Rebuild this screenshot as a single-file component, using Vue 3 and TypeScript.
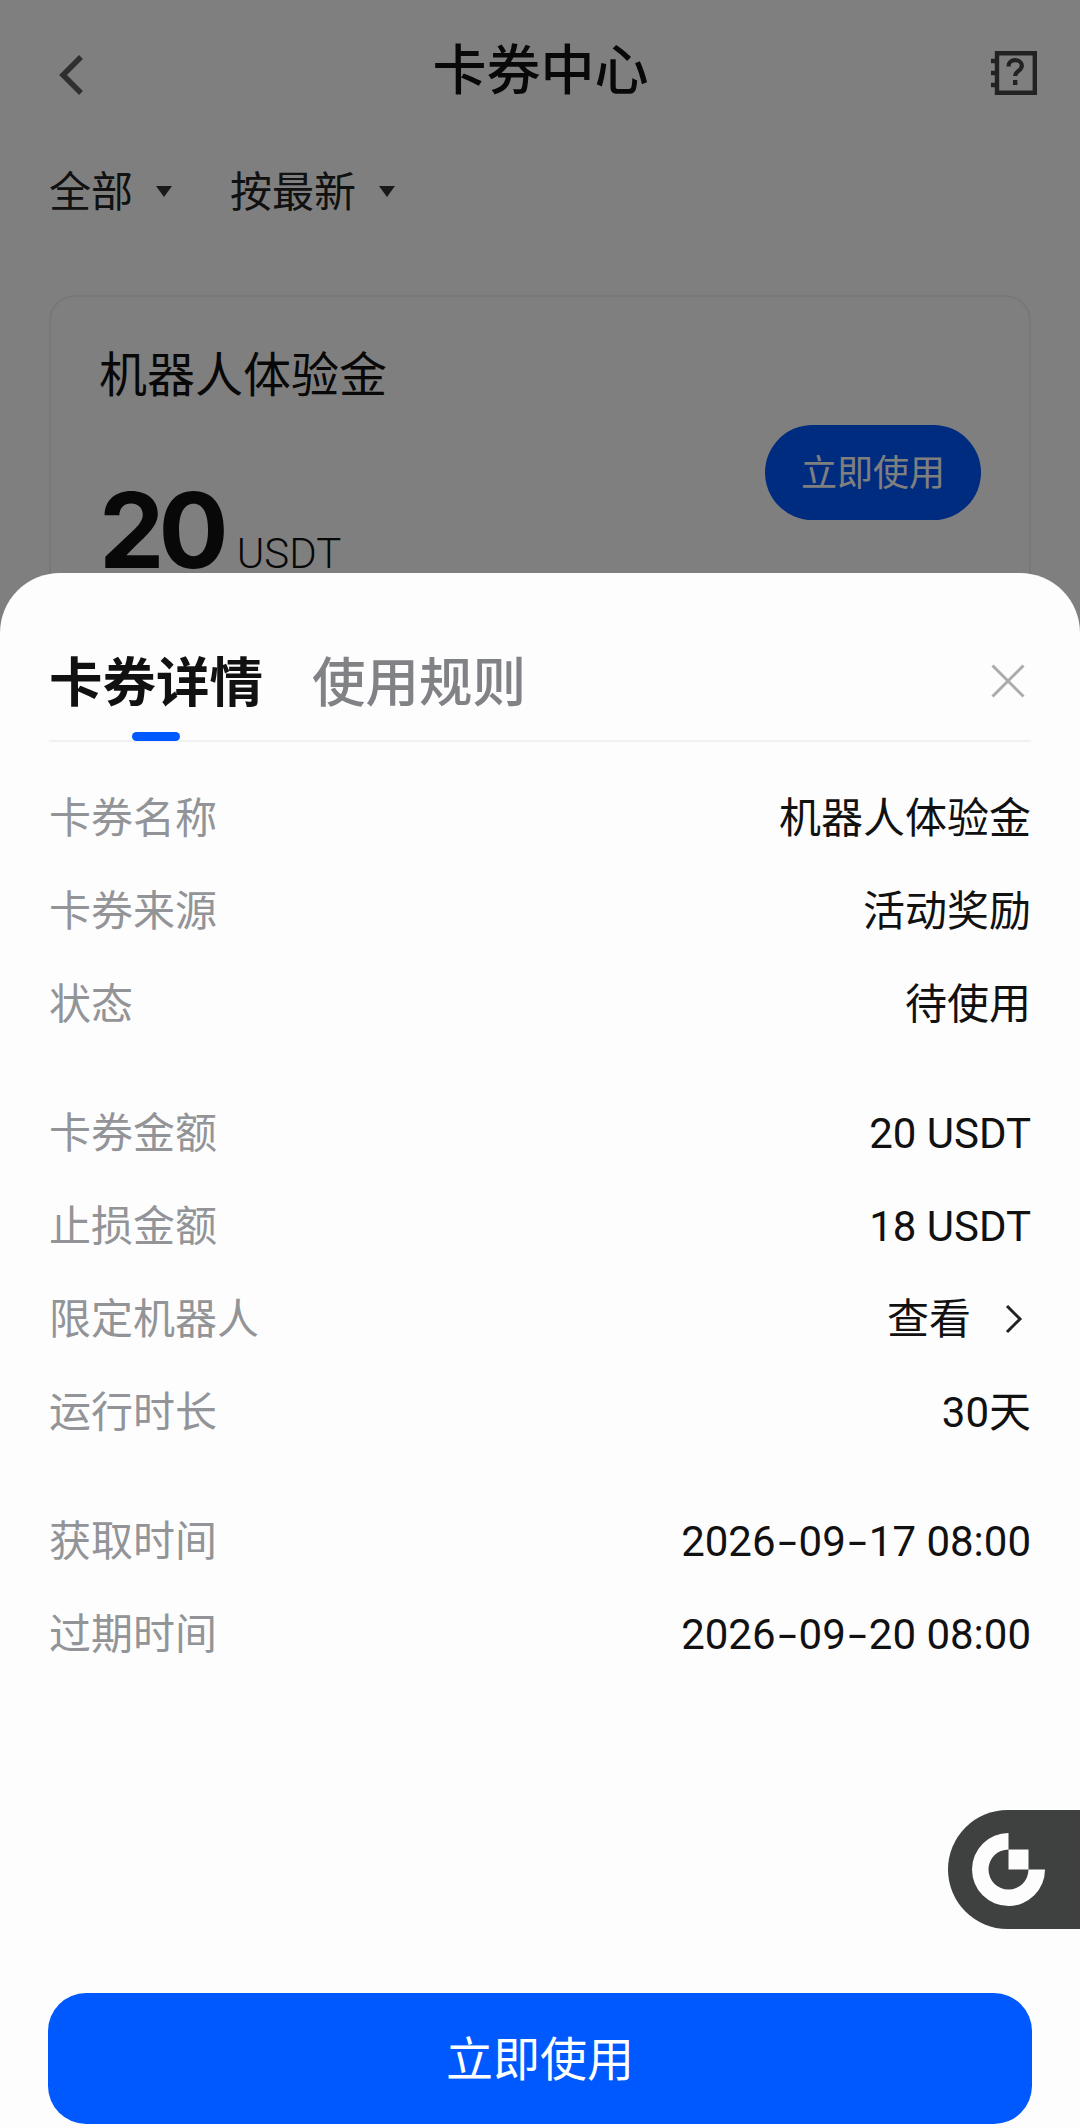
<script setup lang="ts">
interface Row { label: string; value: string; link?: boolean; num?: boolean }
const groups: Row[][] = [
  [
    { label: '卡券名称', value: '机器人体验金' },
    { label: '卡券来源', value: '活动奖励' },
    { label: '状态', value: '待使用' },
  ],
  [
    { label: '卡券金额', value: '20 USDT', num: true },
    { label: '止损金额', value: '18 USDT', num: true },
    { label: '限定机器人', value: '查看', link: true },
    { label: '运行时长', value: '30天' },
  ],
  [
    { label: '获取时间', value: '2026-09-17 08:00', num: true },
    { label: '过期时间', value: '2026-09-20 08:00', num: true },
  ],
]
</script>

<template>
  <div class="page">
    <header class="nav">
      <svg class="back" width="26" height="42" viewBox="0 0 26 42" fill="none">
        <path d="M23 3 5 21l18 18" stroke="#5c5e61" stroke-width="5.500" />
      </svg>
      <h1 class="title">卡券中心</h1>
      <svg class="help" width="46" height="44" viewBox="0 0 46 44" fill="none">
        <path d="M6 2.200h37.800v39.600H6z" stroke="#444" stroke-width="4.400" />
        <path d="M0 10h6M0 22h6M0 34h6" stroke="#444" stroke-width="4.400" />
        <path d="M17.500 15.500c0-4 2.800-6.300 6.700-6.300s6.600 2.300 6.600 5.600c0 5-6.600 5.300-6.600 10.200" stroke="#444" stroke-width="4.200" />
        <path d="M24.200 29v5" stroke="#444" stroke-width="4.400" />
      </svg>
    </header>

    <div class="filters">
      <div class="filter"><span>全部</span><i class="caret"></i></div>
      <div class="filter"><span>按最新</span><i class="caret"></i></div>
    </div>

    <section class="card">
      <div class="card-name">机器人体验金</div>
      <div class="card-foot">
        <div class="amount"><b>20</b><span>USDT</span></div>
        <button class="use-small">立即使用</button>
      </div>
    </section>

    <div class="mask"></div>

    <section class="sheet">
      <div class="tabs">
        <div class="tab active">卡券详情<i class="ink"></i></div>
        <div class="tab">使用规则</div>
        <svg class="close" width="34" height="34" viewBox="0 0 34 34" fill="none">
          <path d="M1.500 1.500l31 31M32.500 1.500l-31 31" stroke="#a9abad" stroke-width="3" />
        </svg>
      </div>

      <div class="groups">
        <div v-for="(group, g) in groups" :key="g" class="group">
          <div v-for="row in group" :key="row.label" class="row">
            <span class="label">{{ row.label }}</span>
            <span class="value" :class="{ num: row.num }">
              <template v-for="(part, p) in row.value.split('-')" :key="p">
                <span v-if="p > 0" class="dash">-</span>{{ part }}
              </template>
              <svg v-if="row.link" class="chev" width="18" height="30" viewBox="0 0 18 30" fill="none">
                <path d="M2 2l13 13L2 28" stroke="#222" stroke-width="3" />
              </svg>
            </span>
          </div>
        </div>
      </div>

      <div class="float">
        <svg width="74" height="74" viewBox="0 0 74 74" fill="none">
          <path d="M36.500 0v16.500A20 20 0 1 0 56.500 36.500H73A36.500 36.500 0 1 1 36.500 0Z" fill="#fdfdfe" />
          <path d="M36.500 16.500h20v20h-20z" fill="#fdfdfe" />
        </svg>
      </div>

      <button class="use-main">立即使用</button>
    </section>
  </div>
</template>

<style>
html, body { margin: 0; background: #fff; }
</style>

<style scoped>
.page {
  position: relative;
  width: 1080px;
  height: 2128px;
  overflow: hidden;
  background: #fff;
  color: #111;
  font-family: Roboto, "Noto Sans CJK SC", sans-serif;
  box-sizing: border-box;
  padding: 0 49px;
}
.nav {
  height: 143px;
  display: flex;
  align-items: center;
  justify-content: space-between;
}
.back { margin-left: 9px; margin-top: 7px; }
.title {
  margin: 0;
  padding-left: 6px;
  font-size: 54px;
  font-weight: 500;
  line-height: 143px;
  height: 143px;
  color: #111;
}
.help { margin-right: -6px; margin-top: 2px; }
.filters {
  display: flex;
  gap: 58px;
  height: 96px;
  padding-bottom: 6px;
  box-sizing: border-box;
  align-items: center;
}
.filter {
  display: flex;
  align-items: center;
  gap: 23px;
  font-size: 42px;
  color: #222;
}
.caret {
  width: 0;
  height: 0;
  border-left: 8px solid transparent;
  border-right: 8px solid transparent;
  border-top: 11px solid #333;
  margin-top: 6px;
}
.card {
  margin-top: 56px;
  height: 400px;
  border: 2px solid #f0f0f0;
  border-radius: 26px;
  padding: 44px 48px 0;
  box-sizing: border-box;
}
.card-name {
  font-size: 48px;
  line-height: 70px;
  color: #111;
}
.card-foot {
  display: flex;
  justify-content: space-between;
  align-items: flex-start;
}
.amount {
  margin-top: 64px;
  display: flex;
  align-items: baseline;
  gap: 14px;
  line-height: 110px;
}
.amount b {
  font-family: Inter, Roboto, sans-serif;
  font-size: 104px;
  font-weight: 700;
  letter-spacing: -6px;
}
.amount span {
  font-size: 42px;
  font-weight: 300;
}
.use-small {
  width: 216px;
  height: 95px;
  margin-top: 14px;
  padding: 0 0 6px;
  border: 0;
  border-radius: 48px;
  background: #0059ff;
  color: #fff;
  font: inherit;
  font-size: 36px;
}
.mask {
  position: absolute;
  inset: 0;
  background: rgba(0, 0, 0, 0.5);
}
.sheet {
  position: absolute;
  left: 0;
  right: 0;
  top: 573px;
  bottom: 0;
  background: #fdfdfe;
  border-radius: 60px 60px 0 0;
  padding: 0 49px;
  box-sizing: border-box;
  display: flex;
  flex-direction: column;
}
.tabs {
  position: relative;
  display: flex;
  gap: 49px;
  height: 169px;
  padding-top: 77px;
  box-sizing: border-box;
  border-bottom: 2px solid #f0f1f2;
}
.tab {
  position: relative;
  font-size: 53.500px;
  line-height: 68px;
  font-weight: 500;
  color: #808285;
}
.tab.active {
  color: #111;
  font-weight: 700;
}
.ink {
  position: absolute;
  left: 83px;
  top: 82px;
  width: 48px;
  height: 9px;
  border-radius: 5px;
  background: #0059ff;
}
.close {
  position: absolute;
  right: 6px;
  top: 91px;
}
.groups {
  display: flex;
  flex-direction: column;
  gap: 36px;
  padding-top: 29px;
}
.row {
  height: 93px;
  display: flex;
  align-items: center;
  justify-content: space-between;
  font-size: 42px;
}
.label {
  color: #929497;
  padding-bottom: 6px;
}
.value {
  color: #111;
  display: flex;
  align-items: center;
  padding-bottom: 6px;
  white-space: pre;
}
.value.num { padding: 2px 0 0; }
.dash {
  display: inline-block;
  width: 23px;
  text-align: center;
  transform: scaleX(1.6);
}
.chev {
  margin-left: 34px;
  margin-right: 8px;
  margin-top: 6px;
}
.float {
  position: absolute;
  right: 0;
  top: 1237px;
  width: 132px;
  height: 119px;
  background: #3f4040;
  border-radius: 60px 0 0 60px;
  display: flex;
  align-items: center;
  padding-left: 24px;
  box-sizing: border-box;
}
.use-main {
  position: absolute;
  left: 48px;
  right: 48px;
  bottom: 4px;
  height: 131px;
  padding: 0 0 6px;
  border: 0;
  border-radius: 38px;
  background: #0059ff;
  color: #fff;
  font: inherit;
  font-size: 47px;
}
</style>
